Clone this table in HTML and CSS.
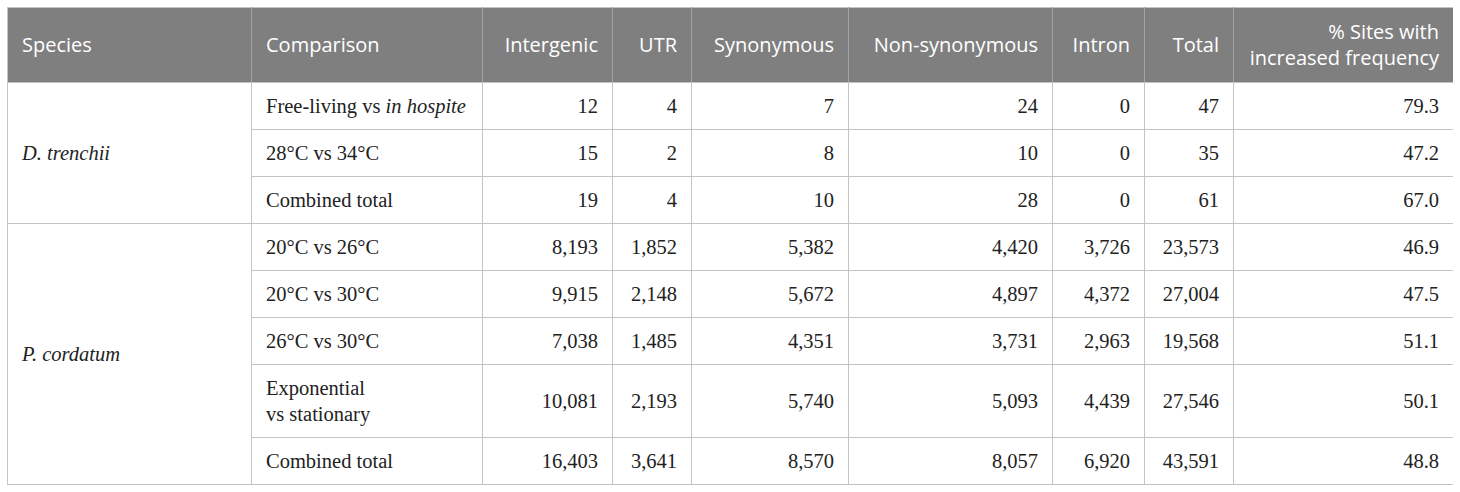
FILE: index.html
```html
<!DOCTYPE html>
<html>
<head>
<meta charset="utf-8">
<link rel="stylesheet" href="styles.css">
</head>
<body>
<table class="data">
  <colgroup>
    <col class="c-species"><col class="c-comp"><col class="c-inter"><col class="c-utr"><col class="c-syn"><col class="c-nonsyn"><col class="c-intron"><col class="c-total"><col class="c-pct">
  </colgroup>
  <thead>
    <tr>
      <th class="left">Species</th>
      <th class="left">Comparison</th>
      <th>Intergenic</th>
      <th>UTR</th>
      <th>Synonymous</th>
      <th>Non-synonymous</th>
      <th>Intron</th>
      <th>Total</th>
      <th>% Sites with<br>increased frequency</th>
    </tr>
  </thead>
  <tbody>
    <tr>
      <td rowspan="3" class="species"><i>D. trenchii</i></td>
      <td class="left">Free-living vs <i>in hospite</i></td>
      <td>12</td><td>4</td><td>7</td><td>24</td><td>0</td><td>47</td><td>79.3</td>
    </tr>
    <tr>
      <td class="left">28°C vs 34°C</td>
      <td>15</td><td>2</td><td>8</td><td>10</td><td>0</td><td>35</td><td>47.2</td>
    </tr>
    <tr>
      <td class="left">Combined total</td>
      <td>19</td><td>4</td><td>10</td><td>28</td><td>0</td><td>61</td><td>67.0</td>
    </tr>
    <tr>
      <td rowspan="5" class="species"><i>P. cordatum</i></td>
      <td class="left">20°C vs 26°C</td>
      <td>8,193</td><td>1,852</td><td>5,382</td><td>4,420</td><td>3,726</td><td>23,573</td><td>46.9</td>
    </tr>
    <tr>
      <td class="left">20°C vs 30°C</td>
      <td>9,915</td><td>2,148</td><td>5,672</td><td>4,897</td><td>4,372</td><td>27,004</td><td>47.5</td>
    </tr>
    <tr>
      <td class="left">26°C vs 30°C</td>
      <td>7,038</td><td>1,485</td><td>4,351</td><td>3,731</td><td>2,963</td><td>19,568</td><td>51.1</td>
    </tr>
    <tr>
      <td class="left">Exponential<br>vs stationary</td>
      <td>10,081</td><td>2,193</td><td>5,740</td><td>5,093</td><td>4,439</td><td>27,546</td><td>50.1</td>
    </tr>
    <tr>
      <td class="left">Combined total</td>
      <td>16,403</td><td>3,641</td><td>8,570</td><td>8,057</td><td>6,920</td><td>43,591</td><td>48.8</td>
    </tr>
  </tbody>
</table>
</body>
</html>
```
FILE: styles.css
```css
html, body {
  background: #ffffff;
}
body {
  margin: 7px;
}
.data {
  border-collapse: collapse;
  table-layout: fixed;
  width: 1446px;
  border: 1px solid #c4c4c4;
}
.c-species { width: 244px; }
.c-comp { width: 231px; }
.c-inter { width: 130px; }
.c-utr { width: 79px; }
.c-syn { width: 157px; }
.c-nonsyn { width: 204px; }
.c-intron { width: 92px; }
.c-total { width: 89px; }
.c-pct { width: 220px; }

.data th {
  background: #7f7f7f;
  color: #ffffff;
  font-family: "Open Sans", "Noto Sans", sans-serif;
  font-weight: 400;
  font-size: 20px;
  line-height: 26px;
  padding: 11px 14px 11px 14px;
  text-align: right;
  vertical-align: middle;
  border: 1px solid #a3a3a3;
  border-top-color: #c4c4c4;
  border-bottom-color: #c4c4c4;
}
.data th:first-child { border-left-color: #c4c4c4; }
.data th:last-child { border-right-color: #c4c4c4; }
.data th.left { text-align: left; }

.data td {
  font-family: "Liberation Serif", "Times New Roman", serif;
  font-size: 20.5px;
  line-height: 26px;
  color: #222222;
  padding: 10px 14px;
  text-align: right;
  vertical-align: middle;
  border: 1px solid #c4c4c4;
}
.data td.left,
.data td.species { text-align: left; }
```
